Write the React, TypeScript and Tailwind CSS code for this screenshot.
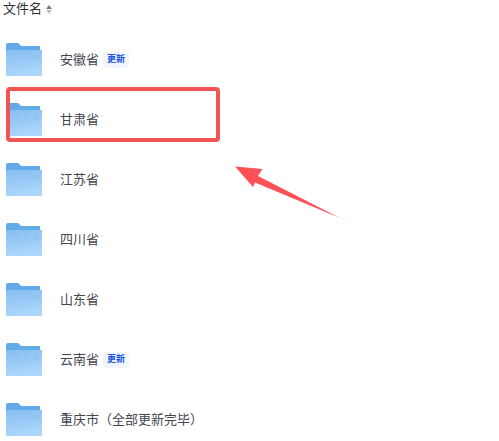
const rows = [
  { name: "安徽省", badge: true },
  { name: "甘肃省" },
  { name: "江苏省" },
  { name: "四川省" },
  { name: "山东省" },
  { name: "云南省", badge: true },
  { name: "重庆市（全部更新完毕）" },
];

function Folder() {
  return (
    <svg width="36" height="33" viewBox="0 0 36 33" className="shrink-0">
      <defs>
        <linearGradient id="front" x1="0" y1="0" x2="0.25" y2="1">
          <stop offset="0" stopColor="#86bdf0" />
          <stop offset="1" stopColor="#abd7fb" />
        </linearGradient>
      </defs>
      <path d="M0 2 Q0 0 2 0 H11 Q13 0 14 2 L15 3 H34 V8 H4 V33 H0 Z" fill="#62abe9" />
      <path d="M0 33 V7 H36 V33 Z" fill="url(#front)" />
      <path d="M26 13 H33 M27 16 H33" stroke="#8dbbe8" strokeWidth="1" />
    </svg>
  );
}

export default function App() {
  return (
    <div className="relative w-[499px] h-[441px] overflow-hidden bg-white font-['Liberation_Sans','Noto_Sans_CJK_SC',sans-serif] text-[13px] text-[#44474f]">
      <div className="flex items-center h-[18px] pl-[3px] gap-[4px] text-[#333]">
        <span>文件名</span>
        <span className="flex flex-col gap-px">
          <span className="w-0 h-0 border-x-[3.5px] border-x-transparent border-b-[4px] border-b-[#777]" />
          <span className="w-0 h-0 border-x-[3.5px] border-x-transparent border-t-[4px] border-t-[#bbb]" />
        </span>
      </div>
      <div className="flex flex-col pt-[25px] gap-[27px] pl-[6px]">
        {rows.map((r) => (
          <div key={r.name} className="flex items-start h-[33px]">
            <Folder />
            <span className="ml-[18px] mt-[7px] leading-[20px]">{r.name}</span>
            {r.badge && (
              <span className="ml-[4px] mt-[9px] flex items-center justify-center w-[26px] h-[16px] rounded-sm bg-[#f1f5fd] text-[9px] font-bold text-[#1a56e0]">
                更新
              </span>
            )}
          </div>
        ))}
      </div>
      <div className="absolute left-[6px] top-[87px] w-[214px] h-[55px] rounded-sm border-4 border-[#f25555]" />
      <svg className="absolute left-[225px] top-[150px]" width="125" height="80" viewBox="0 0 125 80">
        <path d="M10 16.5 L37.5 19 L33 26 L115 68 L30 32.5 L28 37 Z" fill="#fb5157" />
      </svg>
    </div>
  );
}
